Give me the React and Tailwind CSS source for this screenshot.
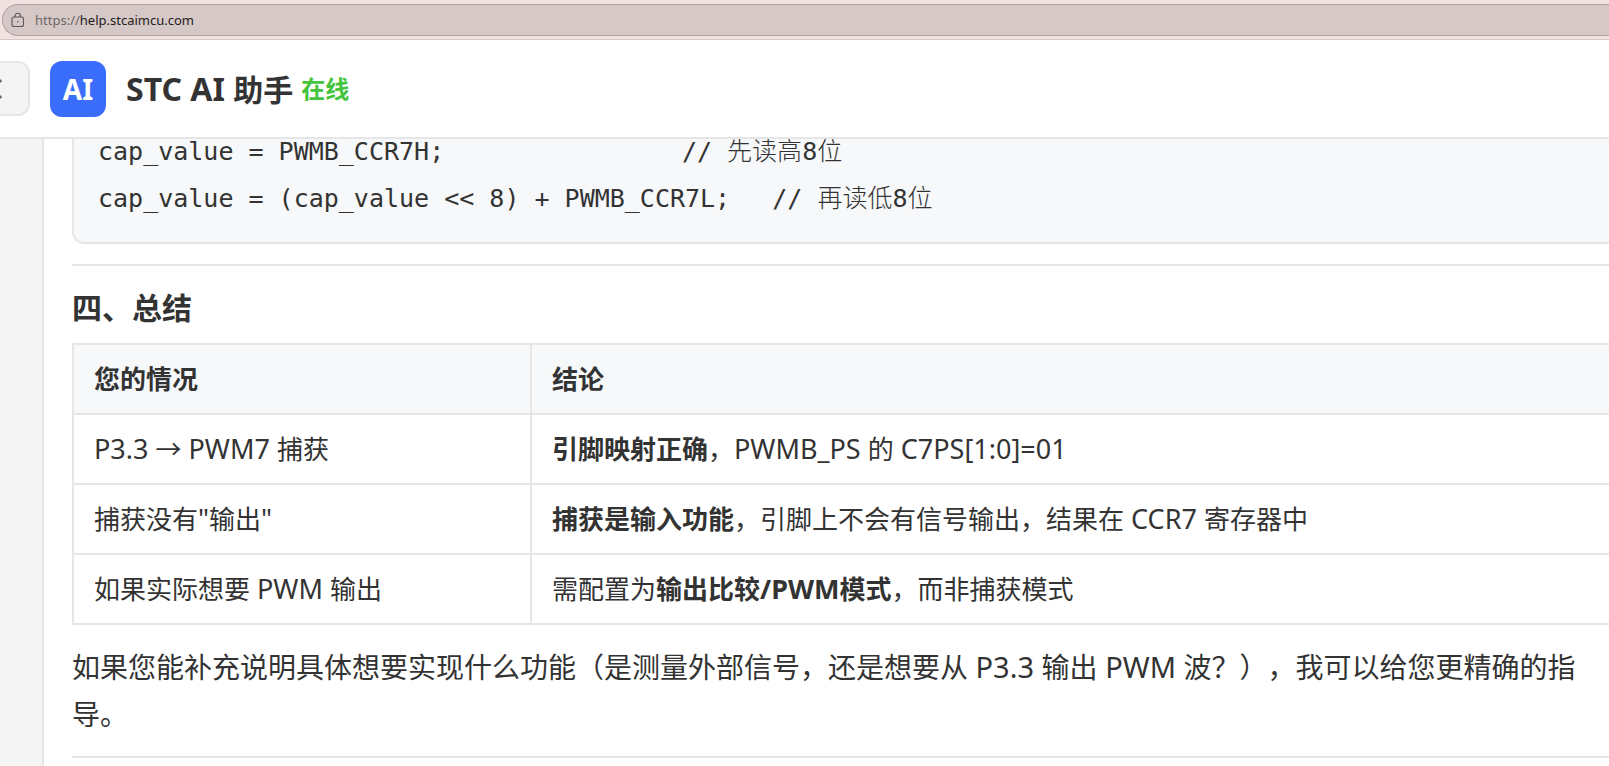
import React from 'react';

const codeLines = [
    { code: 'cap_value = PWMB_CCR7H;               ', before: '先读高', after: '位' },
    { code: 'cap_value = (cap_value << 8) + PWMB_CCR7L;  ', before: '再读低', after: '位' },
];

const rows = [
    { situation: 'P3.3 → PWM7 捕获', lead: '', strong: '引脚映射正确', rest: '，PWMB_PS 的 C7PS[1:0]=01' },
    { situation: '捕获没有"输出"', lead: '', strong: '捕获是输入功能', rest: '，引脚上不会有信号输出，结果在 CCR7 寄存器中' },
    { situation: '如果实际想要 PWM 输出', lead: '需配置为', strong: '输出比较/PWM模式', rest: '，而非捕获模式' },
];

const closing = '如果您能补充说明具体想要实现什么功能（是测量外部信号，还是想要从 P3.3 输出 PWM 波？），我可以给您更精确的指导。';

// Latin runs are set slightly larger than the Chinese text around them
function Mixed({ text, latin }) {
    return text.split(/([\x20-\x7e]+)/).map((part, i) =>
        i % 2 ? <span key={i} className={latin}>{part}</span> : part
    );
}

function LockIcon() {
    return (
        <svg width="14" height="16" viewBox="0 0 14 16" fill="none" stroke="#5f5555" strokeWidth="1.1" aria-hidden="true">
            <rect x="1" y="5" width="11.5" height="9.5" rx="2" />
            <path d="M4 5V4a2.75 2.75 0 0 1 5.5 0v1" />
            <circle cx="6.75" cy="9.75" r="0.8" fill="#5f5555" stroke="none" />
        </svg>
    );
}

function AddressBar() {
    return (
        <div className="h-10 shrink-0 bg-[#f1e2e1] border-b border-[#d6c8c7] pt-1 pl-0.5">
            <div className="h-8 flex items-center gap-2.5 rounded-l-full border border-r-0 border-[#aea2a1] bg-[#d6c8c6] pl-2">
                <LockIcon />
                <a href="https://help.stcaimcu.com" className="text-[13px] leading-4 text-[#211d1d]">
                    <span className="text-[#6f6565]">https://</span>help.stcaimcu.com
                </a>
            </div>
        </div>
    );
}

function ChatHeader() {
    return (
        <header className="h-[99px] shrink-0 flex items-center bg-white border-b-2 border-[#e6e6e6]">
            <button
                aria-label="菜单"
                className="w-[30px] h-[55px] flex items-center justify-start rounded-r-xl border-2 border-l-0 border-[#e6e6e6] bg-[#f4f4f4]"
            >
                <svg width="3" height="24" viewBox="0 0 3 24" fill="#666" aria-hidden="true">
                    <circle cx="0" cy="4" r="1.8" />
                    <circle cx="0" cy="20" r="1.8" />
                </svg>
            </button>
            <div className="ml-5 w-14 h-14 flex items-center justify-center rounded-xl bg-[#3a6dfb] text-white text-[28px] font-bold">AI</div>
            <h1 className="ml-5 text-[30px] font-bold">
                <Mixed text="STC AI 助手" latin="text-[32px]" />
            </h1>
            <span className="ml-2 text-[24px] font-bold text-[#43c43c]">在线</span>
        </header>
    );
}

function App() {
    return (
        <div className="h-screen flex flex-col overflow-hidden bg-white text-[#333] font-['Noto_Sans','Noto_Sans_CJK_SC',sans-serif] [text-spacing-trim:space-all]">
            <AddressBar />
            <ChatHeader />
            <div className="flex-1 min-h-0 flex">
                <aside className="w-11 shrink-0 bg-[#f4f4f4] border-r-2 border-[#e6e6e6]"></aside>
                <main className="flex-1 min-w-0 overflow-hidden pl-7">
                    <pre className="-mt-[11px] pb-5 pl-6 rounded-bl-xl border-l-2 border-b-2 border-[#e6e6e6] bg-[#f6f8fa] text-[25px] leading-[47px] font-['DejaVu_Sans_Mono','Noto_Sans_CJK_SC',monospace]">
                        {codeLines.map((line) => (
                            <code key={line.before} className="block font-[inherit]">
                                {line.code}
                                <span className="ml-3">// <span className="font-light">{line.before}</span>8<span className="font-light">{line.after}</span></span>
                            </code>
                        ))}
                    </pre>
                    <hr className="mt-5 border-t-2 border-[#e6e6e6]" />
                    <h2 className="mt-[18px] text-[30px] leading-[47px] font-bold">四、总结</h2>
                    <table className="mt-3 w-full border-collapse text-[26px] leading-[44px]">
                        <thead className="bg-[#f6f8fa]">
                            <tr>
                                <th className="w-[458px] px-5 py-3 border-2 border-[#e6e6e6] text-left font-bold">您的情况</th>
                                <th className="px-5 py-3 border-y-2 border-[#e6e6e6] text-left font-bold">结论</th>
                            </tr>
                        </thead>
                        <tbody>
                            {rows.map((row) => (
                                <tr key={row.situation}>
                                    <td className="px-5 py-3 border-2 border-[#e6e6e6]">
                                        <Mixed text={row.situation} latin="text-[27px]" />
                                    </td>
                                    <td className="px-5 py-3 border-y-2 border-[#e6e6e6]">
                                        {row.lead}
                                        <strong className="font-bold"><Mixed text={row.strong} latin="text-[27px]" /></strong>
                                        <Mixed text={row.rest} latin="text-[27px]" />
                                    </td>
                                </tr>
                            ))}
                        </tbody>
                    </table>
                    <p className="mt-[18px] pr-5 text-[28px] leading-[47px]">
                        <Mixed text={closing} latin="text-[29px]" />
                    </p>
                    <hr className="mt-[18px] border-t-2 border-[#e6e6e6]" />
                </main>
            </div>
        </div>
    );
}

export default App;
